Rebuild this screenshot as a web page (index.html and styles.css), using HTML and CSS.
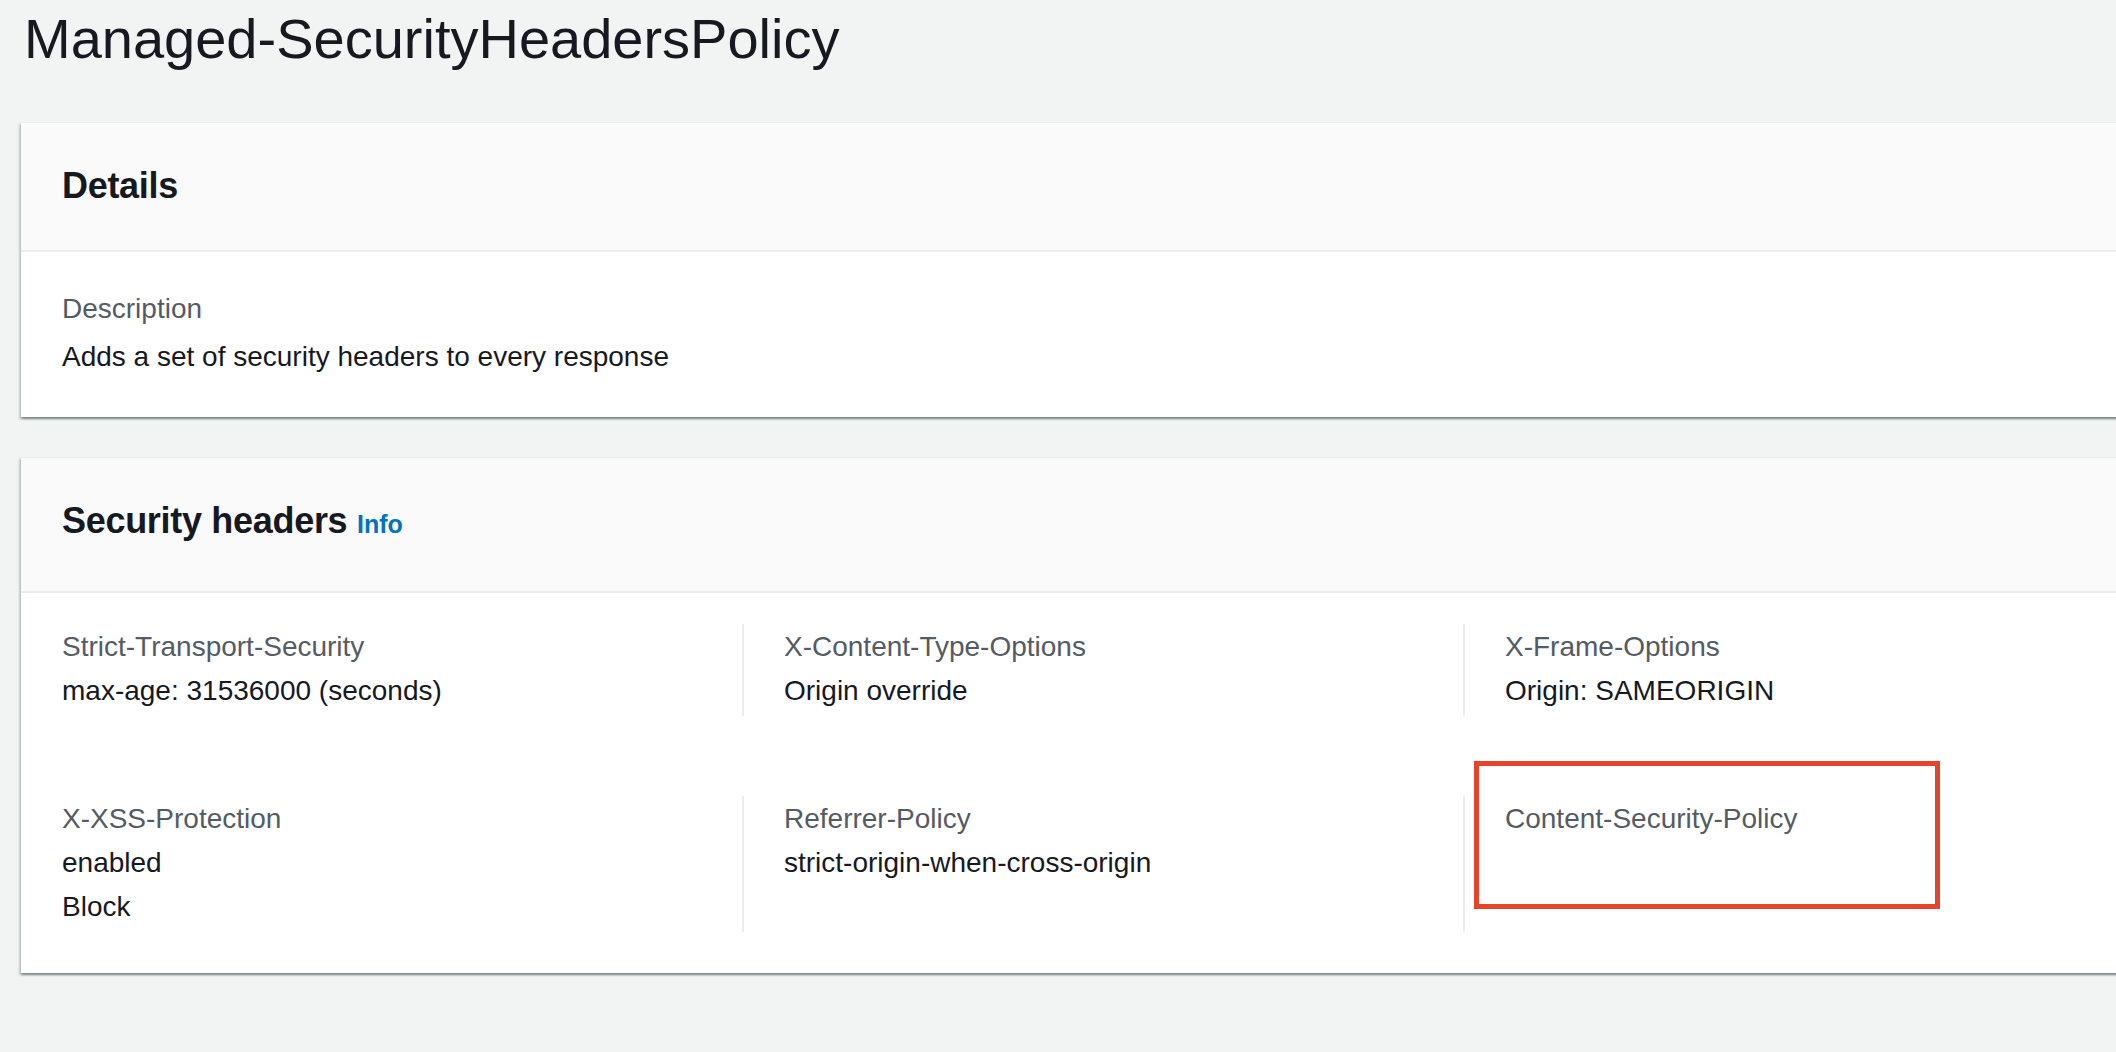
FILE: index.html
```html
<!DOCTYPE html>
<html lang="en">
<head>
<meta charset="utf-8">
<title>Managed-SecurityHeadersPolicy</title>
<link rel="stylesheet" href="styles.css">
</head>
<body>
<main class="page">
  <h1 class="page-title">Managed-SecurityHeadersPolicy</h1>

  <section class="card">
    <header class="card-header">
      <h2 class="card-title">Details</h2>
    </header>
    <div class="card-body card-body-details">
      <div class="kv">
        <div class="kv-label kv-label-spaced">Description</div>
        <div class="kv-value">Adds a set of security headers to every response</div>
      </div>
    </div>
  </section>

  <section class="card">
    <header class="card-header card-header-info">
      <h2 class="card-title">Security headers <a class="info-link" href="#">Info</a></h2>
    </header>
    <div class="card-body card-body-grid">
      <div class="columns">
        <div class="col">
          <div class="kv-label">Strict-Transport-Security</div>
          <div class="kv-value">max-age: 31536000 (seconds)</div>
        </div>
        <div class="col col-divided">
          <div class="kv-label">X-Content-Type-Options</div>
          <div class="kv-value">Origin override</div>
        </div>
        <div class="col col-divided">
          <div class="kv-label">X-Frame-Options</div>
          <div class="kv-value">Origin: SAMEORIGIN</div>
        </div>
        <div class="col">
          <div class="kv-label">X-XSS-Protection</div>
          <div class="kv-value">enabled</div>
          <div class="kv-value">Block</div>
        </div>
        <div class="col col-divided">
          <div class="kv-label">Referrer-Policy</div>
          <div class="kv-value">strict-origin-when-cross-origin</div>
        </div>
        <div class="col col-divided col-marked">
          <div class="kv-label">Content-Security-Policy</div>
          <div class="highlight-box"></div>
        </div>
      </div>
    </div>
  </section>
</main>
</body>
</html>
```

FILE: styles.css
```css
* {
  box-sizing: border-box;
}

html, body {
  margin: 0;
  padding: 0;
}

body {
  background: #f2f3f3;
  font-family: "Liberation Sans", Arial, sans-serif;
  color: #16191f;
  overflow: hidden;
  width: 2116px;
  height: 1052px;
}

.page {
  padding: 3px 0 0 21px;
}

.page-title {
  margin: 0 0 47px 0;
  padding-left: 3px;
  font-size: 56px;
  line-height: 72px;
  font-weight: 400;
  color: #16191f;
}

.card {
  width: 2240px;
  background: #ffffff;
  border-top: 1px solid #eaeded;
  box-shadow: 0 2px 2px 0 rgba(0, 28, 36, 0.3),
              2px 2px 2px 0 rgba(0, 28, 36, 0.15),
              -2px 2px 2px 0 rgba(0, 28, 36, 0.15);
  margin-bottom: 40px;
}

.card-header {
  background: #fafafa;
  border-bottom: 2px solid #eaeded;
  padding: 41px 41px 42px 41px;
}

.card-header-info {
  padding-bottom: 45px;
}

.card-title {
  margin: 0;
  font-size: 36px;
  line-height: 44px;
  font-weight: 700;
  letter-spacing: -0.3px;
  color: #16191f;
}

.info-link {
  font-size: 25px;
  font-weight: 700;
  letter-spacing: 0;
  color: #0073bb;
  text-decoration: none;
  margin-left: 0;
}

.card-body {
  font-size: 28px;
  line-height: 44px;
}

.card-body-details {
  padding: 35px 41px 38px 41px;
}

.card-body-grid {
  padding: 31px 0 41px 0;
}

.kv-label {
  color: #545b64;
}

.kv-label-spaced {
  margin-bottom: 4px;
}

.kv-value {
  color: #16191f;
}

.columns {
  display: grid;
  grid-template-columns: repeat(3, 721px);
  row-gap: 80px;
}

.col {
  padding: 1px 0 3px 41px;
}

.col-divided {
  border-left: 2px solid #eaeded;
  padding-left: 40px;
}

.col-marked {
  position: relative;
}

.highlight-box {
  position: absolute;
  left: 9px;
  top: -35px;
  width: 466px;
  height: 148px;
  border: 5px solid #e5432a;
}
```
